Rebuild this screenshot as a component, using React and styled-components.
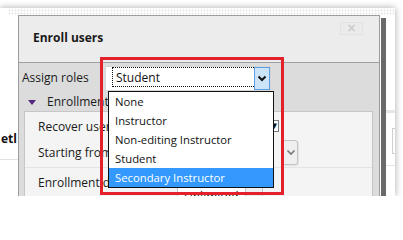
import React from 'react';
import styled, { createGlobalStyle } from 'styled-components';

const GlobalStyle = createGlobalStyle`
  html, body { margin: 0; padding: 0; background: #ffffff; }
  body { font-family: "Open Sans", "Noto Sans", sans-serif; }
`;

const roles = ['None', 'Instructor', 'Non-editing Instructor', 'Student', 'Secondary Instructor'];

export default function App() {
  return (
    <>
      <GlobalStyle />
      <Frame>
        <TopStrip />
        <MainRow>
          <LeftPage>
            <PageWord>etl</PageWord>
            <PageRule />
          </LeftPage>
          <Dialog>
            <Header>
              <Title>Enroll users</Title>
              <CloseButton>×</CloseButton>
            </Header>
            <Body>
              <RoleRow>
                <RoleLabel>Assign roles</RoleLabel>
                <Select>
                  <FocusBox>Student</FocusBox>
                  <SelectButton>
                    <svg width="10" height="7" viewBox="0 0 10 7">
                      <path d="M1.5 1.5 L5 5 L8.5 1.5" fill="none" stroke="#111" strokeWidth="2" />
                    </svg>
                  </SelectButton>
                </Select>
              </RoleRow>
              <SectionHeader>
                <Triangle />
                <span>Enrollment options</span>
              </SectionHeader>
              <Panel>
                <PanelRow $h={28}>
                  <FieldLabel>Recover user enrollments</FieldLabel>
                  <TinySelect>
                    <TinyArrow>▾</TinyArrow>
                  </TinySelect>
                </PanelRow>
                <PanelRow $h={25}>
                  <FieldLabel>Starting from</FieldLabel>
                  <SoftSelect>
                    <SoftButton>
                      <svg width="10" height="7" viewBox="0 0 10 7">
                        <path d="M1.5 1.5 L5 5 L8.5 1.5" fill="none" stroke="#777" strokeWidth="1.6" />
                      </svg>
                    </SoftButton>
                  </SoftSelect>
                </PanelRow>
                <Separator />
                <PanelRow $h={28}>
                  <FieldLabel>Enrollment duration</FieldLabel>
                  <DurationSelect>
                    <DurationText>Unlimited</DurationText>
                    <DurationButton />
                  </DurationSelect>
                </PanelRow>
              </Panel>
            </Body>
          </Dialog>
          <DarkBar />
          <RightPage>
            <RightBand />
            <RightBox />
            <RightRule />
          </RightPage>
        </MainRow>

        <DropList>
          {roles.map((r, i) => (
            <DropItem key={r} $active={i === roles.length - 1}>{r}</DropItem>
          ))}
        </DropList>
        <Highlight />
      </Frame>
    </>
  );
}

const Frame = styled.div`
  position: relative;
  margin-top: 8px;
  width: 395px;
  height: 188px;
  background: #ffffff;
  box-shadow: 0 0 7px rgba(0, 0, 0, 0.35);
  display: flex;
  flex-direction: column;
  overflow: hidden;
`;

const TopStrip = styled.div`
  height: 7px;
  margin-left: 8px;
  background-color: #ffffff;
  background-image: radial-gradient(circle, #e6e6e6 0.9px, transparent 1.1px);
  background-size: 3px 3px;
  background-position: 0 1px;
`;

const MainRow = styled.div`
  flex: 1;
  display: flex;
  min-height: 0;
`;

const LeftPage = styled.div`
  width: 18px;
  display: flex;
  flex-direction: column;
  align-items: flex-end;
  padding-top: 116px;
  box-sizing: border-box;
`;

const PageWord = styled.div`
  font-weight: 700;
  font-size: 12px;
  line-height: 16px;
  color: #111;
  padding-right: 1px;
`;

const PageRule = styled.div`
  align-self: stretch;
  margin-top: 12px;
  height: 1px;
  background: #e2e2e2;
`;

const Dialog = styled.div`
  width: 362px;
  box-sizing: border-box;
  border: 1px solid #9c9c9c;
  border-bottom: none;
  display: flex;
  flex-direction: column;
  background: #dcdcdc;
`;

const Header = styled.div`
  height: 47px;
  box-sizing: border-box;
  background: #ececec;
  border-bottom: 1px solid #a0a0a0;
  display: flex;
  justify-content: space-between;
  align-items: center;
  padding-left: 14px;
  padding-right: 16px;
`;

const Title = styled.div`
  font-weight: 700;
  font-size: 12px;
  color: #1a1a1a;
  margin-top: -3px;
`;

const CloseButton = styled.div`
  align-self: flex-start;
  margin-top: 6px;
  width: 21px;
  height: 11px;
  border: 1px solid #e2e2e2;
  background: #ebebeb;
  color: #cbcbcb;
  font-family: "DejaVu Sans", sans-serif;
  font-weight: 700;
  font-size: 12px;
  line-height: 11px;
  text-align: center;
`;

const Body = styled.div`
  flex: 1;
  display: flex;
  flex-direction: column;
  min-height: 0;
`;

const RoleRow = styled.div`
  display: flex;
  align-items: center;
  padding-top: 3px;
  height: 25px;
`;

const RoleLabel = styled.div`
  width: 86px;
  padding-left: 3px;
  box-sizing: border-box;
  font-size: 12px;
  color: #1a1a1a;
  margin-top: -2px;
`;

const Select = styled.div`
  width: 166px;
  height: 25px;
  box-sizing: border-box;
  background: #ffffff;
  border: 1px solid #d6d6d6;
  display: flex;
  align-items: flex-start;
`;

const FocusBox = styled.div`
  flex: 1;
  height: 20px;
  box-sizing: border-box;
  margin-left: 6px;
  border: 1px dotted #111;
  border-right: none;
  padding-left: 3px;
  font-size: 12px;
  line-height: 19px;
  color: #111;
`;

const SelectButton = styled.div`
  width: 16px;
  height: 23px;
  box-sizing: border-box;
  background: #cce4f7;
  border: 1px solid #5a9fe0;
  display: flex;
  align-items: center;
  justify-content: center;
`;

const SectionHeader = styled.div`
  height: 22px;
  display: flex;
  align-items: center;
  gap: 11px;
  padding-left: 9px;
  font-size: 12px;
  color: #1a1a1a;
  white-space: nowrap;
`;

const Triangle = styled.div`
  width: 0;
  height: 0;
  margin-top: 3px;
  border-left: 4px solid transparent;
  border-right: 4px solid transparent;
  border-top: 5px solid #55287e;
`;

const Panel = styled.div`
  flex: 1;
  margin: 0 6px 0 5px;
  background: #f4f4f4;
  border: 1px solid #c6c6c6;
  border-bottom: none;
  display: flex;
  flex-direction: column;
`;

const PanelRow = styled.div`
  height: ${p => p.$h}px;
  display: flex;
  align-items: center;
`;

const FieldLabel = styled.div`
  width: 150px;
  box-sizing: border-box;
  padding-left: 13px;
  font-size: 12px;
  color: #1a1a1a;
  white-space: nowrap;
`;

const TinySelect = styled.div`
  width: 104px;
  height: 12px;
  box-sizing: border-box;
  border: 1px solid #7a7a7a;
  background: #fff;
  display: flex;
  justify-content: flex-end;
  align-items: center;
  margin-top: -1px;
`;

const TinyArrow = styled.span`
  font-family: "DejaVu Sans", sans-serif;
  font-size: 11px;
  line-height: 10px;
  color: #111;
  padding-right: 1px;
`;

const SoftSelect = styled.div`
  width: 120px;
  height: 25px;
  display: flex;
  justify-content: flex-end;
  margin-left: 3px;
`;

const SoftButton = styled.div`
  width: 15px;
  height: 25px;
  box-sizing: border-box;
  border: 1px solid #c4c4c4;
  border-radius: 0 3px 3px 0;
  background: #efefef;
  box-shadow: 1px 1px 1px rgba(0, 0, 0, 0.08);
  display: flex;
  align-items: center;
  justify-content: center;
`;

const Separator = styled.div`
  height: 1px;
  background: #e4e4e4;
  margin: 2px 0 0;
`;

const DurationSelect = styled.div`
  margin-left: 2px;
  margin-top: 20px;
  width: 86px;
  height: 22px;
  box-sizing: border-box;
  border: 1px solid #c4c4c4;
  background: #fff;
  display: flex;
  align-items: flex-start;
  justify-content: space-between;
  padding-left: 6px;
  font-size: 12px;
  color: #111;
`;

const DurationText = styled.span`
  line-height: 18px;
  padding-top: 6px;
`;

const DurationButton = styled.div`
  width: 16px;
  height: 20px;
  border-left: 1px solid #c4c4c4;
  background: #efefef;
`;

const DarkBar = styled.div`
  width: 5px;
  margin-left: 1px;
  margin-top: 3px;
  background: #6a6a6a;
`;

const RightPage = styled.div`
  flex: 1;
  display: flex;
  flex-direction: column;
  padding-top: 95px;
`;

const RightBand = styled.div`
  height: 3px;
  background: #e6e6e6;
`;

const RightBox = styled.div`
  margin: 15px 0 0 6px;
  height: 24px;
  border: 1px solid #cfcfcf;
  border-right: none;
`;

const RightRule = styled.div`
  margin-top: 11px;
  height: 1px;
  background: #e4e4e4;
`;

const DropList = styled.div`
  position: absolute;
  left: 108px;
  top: 83px;
  width: 166px;
  box-sizing: border-box;
  border: 1px solid #111;
  background: #ffffff;
  display: flex;
  flex-direction: column;
`;

const DropItem = styled.div`
  height: 19px;
  line-height: 19px;
  padding-left: 6px;
  font-size: 11.3px;
  white-space: nowrap;
  color: ${p => (p.$active ? '#ffffff' : '#111111')};
  background: ${p => (p.$active ? '#3399ff' : 'transparent')};
`;

const Highlight = styled.div`
  position: absolute;
  left: 100px;
  top: 49px;
  width: 184px;
  height: 138px;
  box-sizing: border-box;
  border: 3px solid #e4202a;
  pointer-events: none;
`;
